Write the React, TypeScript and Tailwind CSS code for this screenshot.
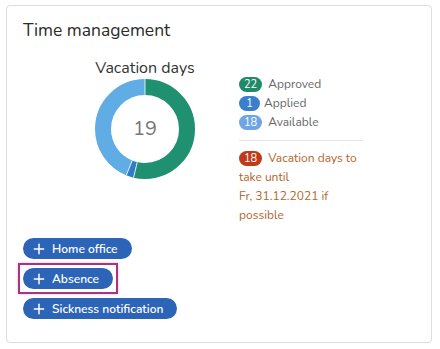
import { Plus } from "lucide-react";

const font = { fontFamily: "Nunito, Lato, 'Open Sans', sans-serif" };

function Donut() {
  const r = 42;
  const c = 2 * Math.PI * r;
  const total = 41;
  const parts = [
    { v: 22, color: "#1f9070" },
    { v: 1, color: "#2f7dc6" },
    { v: 18, color: "#60ace4" },
  ];
  let offset = 0;
  return (
    <div className="relative h-[100px] w-[100px]">
      <svg width="100" height="100" viewBox="0 0 100 100" className="-rotate-90">
        {parts.map((p, i) => {
          const len = (p.v / total) * c;
          const el = (
            <circle
              key={i}
              cx="50"
              cy="50"
              r={r}
              fill="none"
              stroke={p.color}
              strokeWidth="16"
              strokeDasharray={`${len} ${c - len}`}
              strokeDashoffset={-offset}
            />
          );
          offset += len;
          return el;
        })}
        {[0, 22, 23].map((v) => {
          const a = (v / total) * 2 * Math.PI;
          return (
            <line
              key={v}
              x1={50 + 34 * Math.cos(a)}
              y1={50 + 34 * Math.sin(a)}
              x2={50 + 50 * Math.cos(a)}
              y2={50 + 50 * Math.sin(a)}
              stroke="white"
              strokeWidth="0.8"
            />
          );
        })}
      </svg>
      <div className="absolute inset-0 flex items-center justify-center text-[20px] text-[#777]">
        19
      </div>
    </div>
  );
}

function Badge({ n, className }: { n: string; className: string }) {
  return (
    <span
      className={`inline-flex h-[15px] min-w-[21px] shrink-0 items-center justify-center rounded-full px-[5px] text-[11px] leading-none text-white ${className}`}
    >
      {n}
    </span>
  );
}

function ActionButton({ label }: { label: string }) {
  return (
    <button className="flex h-[21px] items-center gap-[5px] self-start rounded-full bg-[#2c65b8] pl-[8px] pr-[14px] text-[12px] font-semibold text-white">
      <Plus size={16} strokeWidth={2.2} />
      {label}
    </button>
  );
}

export default function App() {
  return (
    <div className="h-[349px] w-[440px] bg-white pl-[6px] pt-[5px]" style={font}>
      <div className="h-[338px] w-[426px] rounded-[4px] border border-[#dcdcdc] px-[16px] pt-[12px]">
        <h2 className="text-[17.5px] leading-[24px] text-[#2b2b2b]">Time management</h2>

        <div className="mt-[15px] flex items-start">
          <div className="ml-[70px] flex w-[104px] flex-col items-center">
            <p className="whitespace-nowrap text-[16px] leading-[22px] text-[#333]">Vacation days</p>
            <Donut />
          </div>

          <div className="ml-[42px] mt-[20px] w-[124px] text-[12px] text-[#666]">
            <div className="flex flex-col gap-[4px] leading-[15px]">
              <div className="flex items-center gap-[6px]">
                <Badge n="22" className="bg-[#1f8a68]" />
                <span>Approved</span>
              </div>
              <div className="flex items-center gap-[4px]">
                <Badge n="1" className="bg-[#3a7fcf]" />
                <span>Applied</span>
              </div>
              <div className="flex items-center gap-[6px]">
                <Badge n="18" className="bg-[#6fa6e2]" />
                <span>Available</span>
              </div>
            </div>
            <div className="mt-[10px] border-t border-[#e6e6e6]" />
            <div className="mt-[8px] leading-[19px] text-[#b4652b]">
              <div className="flex items-center gap-[6px]">
                <Badge n="18" className="bg-[#c03a1a]" />
                <span>Vacation days to</span>
              </div>
              <p>take until</p>
              <p>Fr, 31.12.2021 if</p>
              <p>possible</p>
            </div>
          </div>
        </div>

        <div className="mt-[13px] flex flex-col gap-[9px]">
          <ActionButton label="Home office" />
          <div className="-my-[5px] -ml-[5px] self-start border-2 border-[#a4357e] p-[3px] shadow-[0_0_3px_#f3b6dc]">
            <ActionButton label="Absence" />
          </div>
          <ActionButton label="Sickness notification" />
        </div>
      </div>
    </div>
  );
}
